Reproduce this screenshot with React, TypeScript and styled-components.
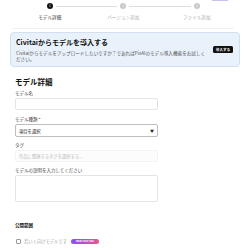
import React from "react";
import styled, { createGlobalStyle } from "styled-components";

const Global = createGlobalStyle`
  html, body { margin: 0; padding: 0; background: #fff; }
  body { font-family: "Noto Sans CJK JP", "Noto Sans", "Liberation Sans", sans-serif; color: #111; }
  * { box-sizing: border-box; }
`;

const Page = styled.div`
  width: 245px;
  height: 250px;
  overflow: hidden;
  position: relative;
`;

const TopAccent = styled.div`
  position: absolute;
  top: 0;
  left: 212px;
  width: 16px;
  height: 1px;
  background: #c9c2ec;
`;

const Stepper = styled.div`
  display: grid;
  grid-template-columns: repeat(3, 73.5px);
  margin: 0 0 0 13px;
  padding-top: 3px;
  padding-bottom: 8px;
  border-bottom: 1px solid #f1f1f1;
  width: 221px;
`;

const Step = styled.div`
  display: flex;
  flex-direction: column;
  align-items: center;
  position: relative;
  gap: 5px;
`;

const Dot = styled.div<{ $active?: boolean }>`
  width: 6px;
  height: 6px;
  border-radius: 50%;
  background: ${(p) => (p.$active ? "#111" : "#c8c8c8")};
  color: #fff;
  font-size: 3px;
  line-height: 6px;
  text-align: center;
  z-index: 1;
`;

const Line = styled.div`
  position: absolute;
  top: 2.5px;
  left: calc(50% + 6px);
  width: calc(100% - 12px);
  height: 1px;
  background: #dedede;
`;

const StepLabel = styled.div<{ $active?: boolean }>`
  font-size: 4.6px;
  line-height: 6px;
  color: ${(p) => (p.$active ? "#333" : "#aaa")};
`;

const Banner = styled.div`
  margin: 3px 5px 0 10px;
  height: 35px;
  background: #e9f1fb;
  border: 1px solid #d3dff0;
  border-radius: 4px;
  display: flex;
  align-items: flex-start;
  padding: 5px 6px 0 5px;
  gap: 6px;
`;

const BannerText = styled.div`
  flex: 1;
  display: flex;
  flex-direction: column;
  gap: 3px;
`;

const BannerTitle = styled.div`
  font-size: 7px;
  font-weight: 700;
  line-height: 9px;
  color: #111;
`;

const BannerDesc = styled.div`
  font-size: 4.6px;
  line-height: 6px;
  color: #555;
`;

const DarkButton = styled.button`
  margin-top: 8px;
  border: none;
  background: #111;
  color: #fff;
  font-family: inherit;
  font-size: 3.6px;
  font-weight: 700;
  width: 20px;
  height: 7px;
  border-radius: 1.5px;
  padding: 0;
  line-height: 7px;
  flex-shrink: 0;
`;

const Form = styled.div`
  padding: 10px 0 0 15px;
  width: 158px;
  display: flex;
  flex-direction: column;
`;

const SectionTitle = styled.div`
  font-size: 7.5px;
  font-weight: 700;
  line-height: 10px;
  margin-bottom: 3px;
`;

const Label = styled.div<{ $bold?: boolean }>`
  font-size: 4.5px;
  line-height: 6px;
  color: ${(p) => (p.$bold ? "#111" : "#444")};
  font-weight: ${(p) => (p.$bold ? 700 : 400)};
  margin-bottom: 2px;
`;

const Field = styled.div<{ $h: number; $border?: string; $mb: number; $bg?: string }>`
  height: ${(p) => p.$h}px;
  border: 1px solid ${(p) => p.$border || "#e4e4e4"};
  border-radius: 2px;
  background: ${(p) => p.$bg || "#fff"};
  margin-bottom: ${(p) => p.$mb}px;
  display: flex;
  align-items: center;
  justify-content: space-between;
  padding: 0 3px;
  font-size: 4.3px;
  color: #222;
`;

const Placeholder = styled.span`
  color: #bbb;
  font-size: 4.3px;
`;

const Caret = styled.span`
  font-size: 4px;
  color: #222;
`;

const CheckRow = styled.div`
  display: flex;
  align-items: center;
  gap: 3px;
  margin-top: 8px;
`;

const Box = styled.div`
  width: 5px;
  height: 5px;
  border: 0.7px solid #999;
  border-radius: 1px;
  margin-left: 1px;
`;

const CheckText = styled.span`
  font-size: 4.3px;
  color: #aaa;
  line-height: 6px;
`;

const Badge = styled.span`
  background: linear-gradient(90deg, #8b4cf0, #e8588c);
  color: #fff;
  font-size: 2.6px;
  font-weight: 700;
  height: 5px;
  line-height: 5px;
  padding: 0 2.5px;
  border-radius: 3px;
  margin-left: 1px;
  width: 28px;
  text-align: center;
  overflow: hidden;
`;

const steps = ["モデル詳細", "バージョン追加", "ファイル追加"];

export default function App() {
  return (
    <Page>
      <Global />
      <TopAccent />
      <Stepper>
        {steps.map((s, i) => (
          <Step key={s}>
            <Dot $active={i === 0}>{i + 1}</Dot>
            {i < steps.length - 1 && <Line />}
            <StepLabel $active={i === 0}>{s}</StepLabel>
          </Step>
        ))}
      </Stepper>
      <Banner>
        <BannerText>
          <BannerTitle>Civitaiからモデルを導入する</BannerTitle>
          <BannerDesc>
            Civitaiからモデルをアップロードしたいですか？であればPixAIのモデル導入機能をお試しください。
          </BannerDesc>
        </BannerText>
        <DarkButton>導入する</DarkButton>
      </Banner>
      <Form>
        <SectionTitle>モデル詳細</SectionTitle>
        <Label>モデル名</Label>
        <Field $h={12} $mb={6} />
        <Label>モデル種類 *</Label>
        <Field $h={13} $mb={5} $border="#bdbdbd">
          <span>項目を選択</span>
          <Caret>▼</Caret>
        </Field>
        <Label>タグ</Label>
        <Field $h={12} $mb={5} $border="#f3f3f3" $bg="#fcfcfc">
          <Placeholder>作品に関連するタグを選択する...</Placeholder>
        </Field>
        <Label>モデルの説明を入力してください</Label>
        <Field $h={27} $mb={20} />
        <Label $bold>公開範囲</Label>
        <CheckRow>
          <Box />
          <CheckText>若い人向けモデルです</CheckText>
          <Badge>NEW FEATURE</Badge>
        </CheckRow>
      </Form>
    </Page>
  );
}
